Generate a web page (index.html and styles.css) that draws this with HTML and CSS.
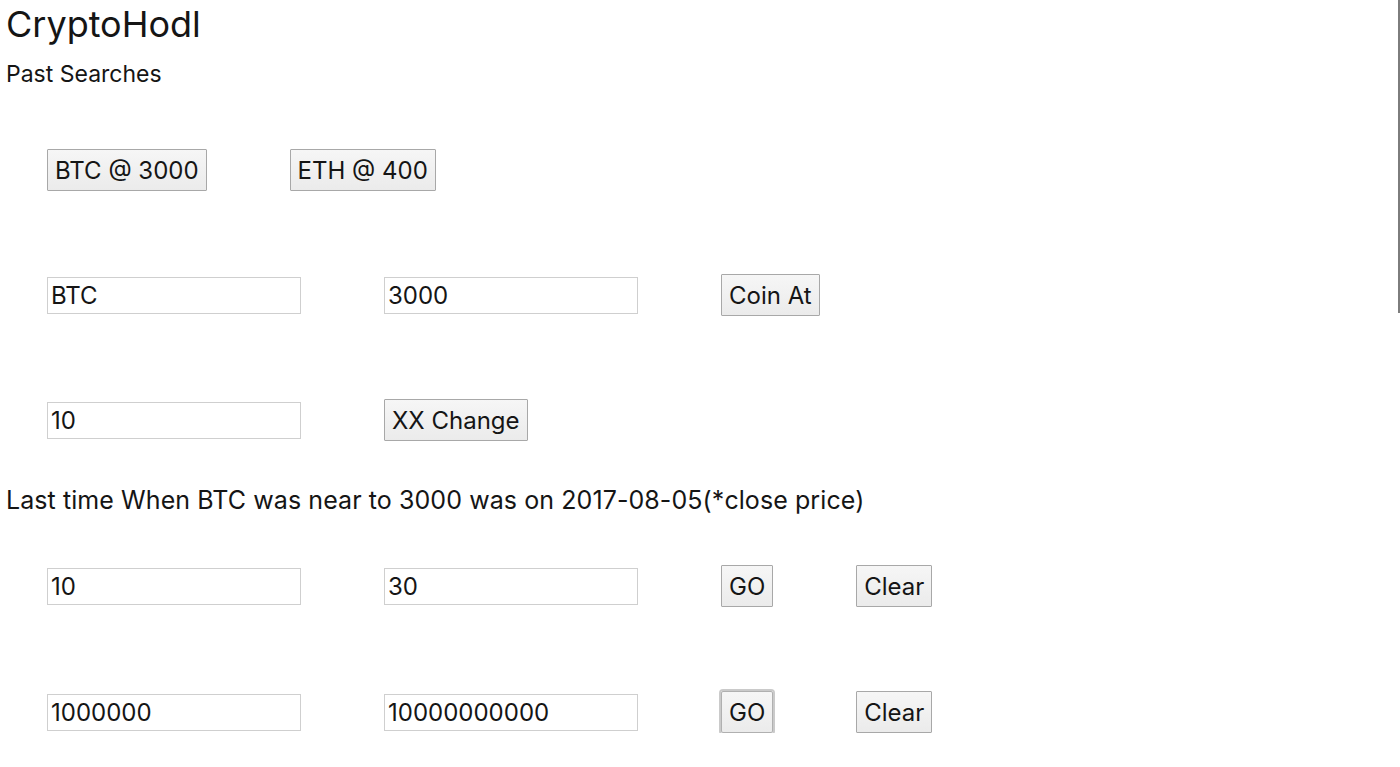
FILE: index.html
```html
<!DOCTYPE html>
<html>
<head>
<meta charset="utf-8">
<title>CryptoHodl</title>
<link rel="stylesheet" href="styles.css">
</head>
<body>
<div class="app">
  <h1 class="title">CryptoHodl</h1>
  <div class="subtitle">Past Searches</div>

  <div class="row row-past">
    <button class="btn">BTC @ 3000</button>
    <button class="btn">ETH @ 400</button>
  </div>

  <div class="row">
    <input class="field" type="text" value="BTC">
    <input class="field" type="text" value="3000">
    <button class="btn">Coin At</button>
  </div>

  <div class="row">
    <input class="field" type="text" value="10">
    <button class="btn">XX Change</button>
  </div>

  <p class="result">Last time When BTC was near to 3000 was on 2017-08-05(*close price)</p>

  <div class="row row-after-text">
    <input class="field" type="text" value="10">
    <input class="field" type="text" value="30">
    <button class="btn">GO</button>
    <button class="btn">Clear</button>
  </div>

  <div class="row row-last">
    <input class="field" type="text" value="1000000">
    <input class="field" type="text" value="10000000000">
    <button class="btn btn-focus">GO</button>
    <button class="btn">Clear</button>
  </div>
</div>
<div class="scrollbar"></div>
</body>
</html>
```

FILE: styles.css
```css
html, body {
  margin: 0;
  padding: 0;
  background: #ffffff;
}

body {
  font-family: "Inter", "Liberation Sans", sans-serif;
  color: #111111;
  overflow: hidden;
}

.app {
  padding: 0 0 0 6px;
}

.title {
  margin: 0;
  padding-top: 2px;
  font-size: 36px;
  font-weight: 400;
  line-height: 44px;
  color: #151515;
}

.subtitle {
  margin-top: 13px;
  font-size: 23px;
  line-height: 30px;
  color: #151515;
}

.row {
  display: flex;
  align-items: center;
  gap: 83px;
  height: 42px;
  padding-left: 41px;
  margin-top: 83px;
}

.row-past {
  margin-top: 60px;
}

.row-after-text {
  margin-top: 50px;
}

.row-last {
  margin-top: 84px;
}

.btn {
  font-family: "Inter", "Liberation Sans", sans-serif;
  font-size: 24px;
  color: #151515;
  height: 42px;
  padding: 0 7px;
  margin: 0;
  border: 1px solid #a8a8a8;
  border-radius: 1px;
  background: linear-gradient(#f6f6f6, #ebebeb);
}

.btn-focus {
  box-shadow: 0 0 0 2px #cacaca;
  border-color: #b0b0b0;
  border-radius: 2px;
}

.field {
  box-sizing: border-box;
  width: 254px;
  height: 37px;
  margin: 0;
  padding: 0 3px;
  font-family: "Inter", "Liberation Sans", sans-serif;
  font-size: 24px;
  color: #151515;
  border: 1px solid #cfcfcf;
  background: #ffffff;
}

.result {
  margin: 44px 0 0 0;
  font-size: 25px;
  line-height: 30px;
  letter-spacing: 0.08px;
  color: #151515;
}

.scrollbar {
  position: absolute;
  top: 0;
  right: 0;
  width: 2px;
  height: 313px;
  background: #7d7d7d;
}
```
